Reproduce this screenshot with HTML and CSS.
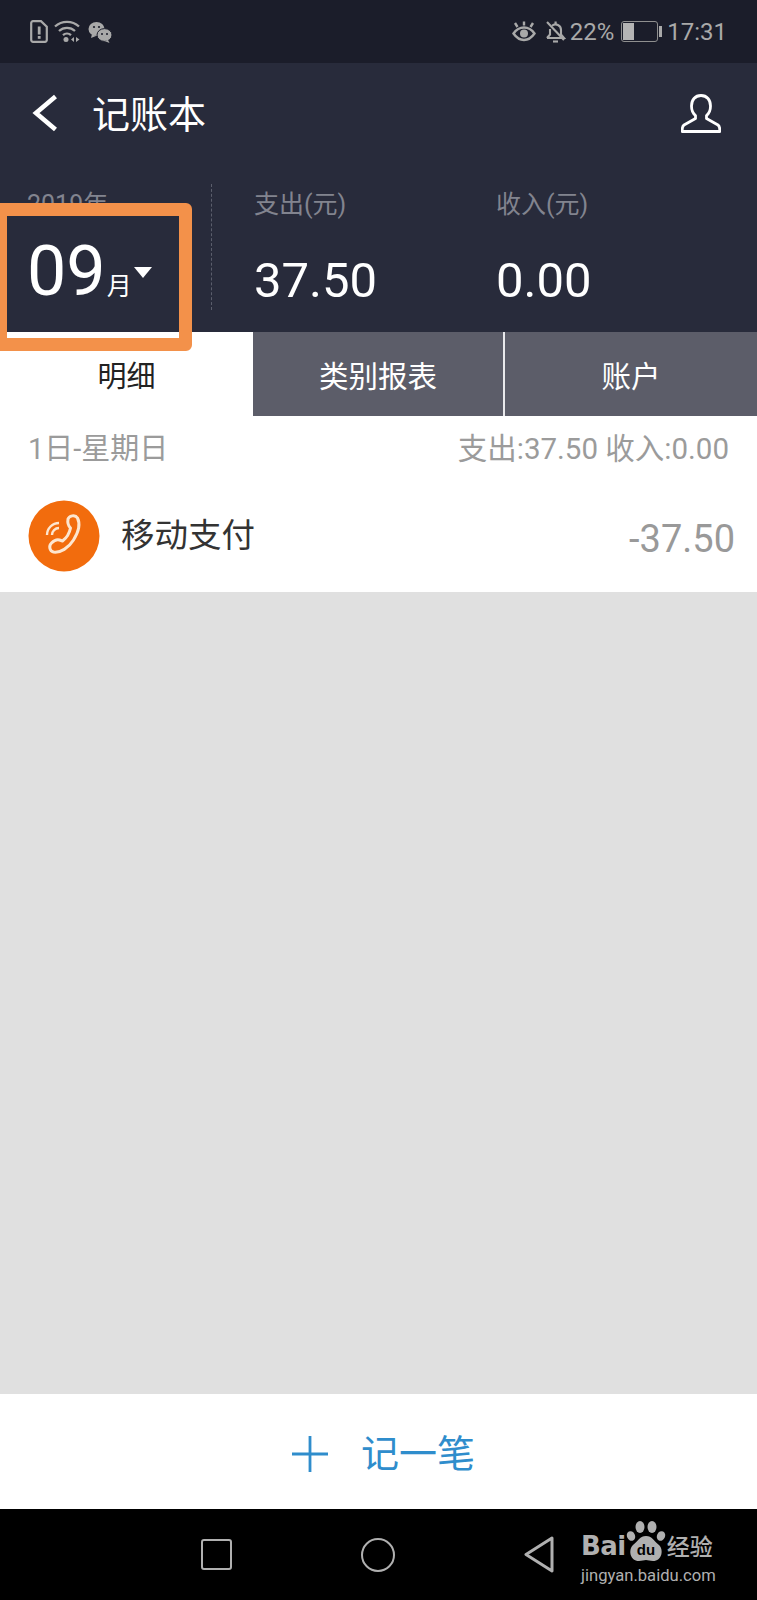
FILE: index.html
```html
<!DOCTYPE html>
<html lang="zh-CN">
<head>
    <meta charset="UTF-8">
    <title>记账本</title>
    <link rel="stylesheet" href="styles.css">
</head>
<body>
<div class="phone">
    <div class="status-bar">
        <div class="status-left">
            <svg width="18" height="23" viewBox="0 0 18 23"><path d="M3 1.200h8l5.800 5.600V20a1.800 1.800 0 0 1-1.800 1.800H3A1.800 1.800 0 0 1 1.200 20V3A1.800 1.800 0 0 1 3 1.200z" fill="none" stroke="#a9a9a9" stroke-width="2.200"/><rect x="7.800" y="6.500" width="2.800" height="8" fill="#a9a9a9"/><rect x="7.800" y="16" width="2.800" height="2.800" fill="#a9a9a9"/></svg>
            <svg width="28" height="23" viewBox="0 0 28 23"><g fill="none" stroke="#a9a9a9" stroke-width="2.300"><path d="M1 6.500a18 18 0 0 1 24 0"/><path d="M5 11a12 12 0 0 1 16 0"/><path d="M9 15.200a6 6 0 0 1 8 0"/></g><circle cx="12" cy="19.500" r="2.500" fill="#a9a9a9"/><path d="M20 17v5l-3-2.500zM22 17v5l3.500-2.500z" fill="#a9a9a9"/></svg>
            <svg width="24" height="22" viewBox="0 0 24 22"><ellipse cx="8.500" cy="8" rx="8" ry="7" fill="#a9a9a9"/><path d="M4 13l-1 4 5-2z" fill="#a9a9a9"/><ellipse cx="16.500" cy="14" rx="7.500" ry="6.400" fill="#a9a9a9" stroke="#1b1d2a" stroke-width="1"/><path d="M20 19l1.500 3-5-2z" fill="#a9a9a9"/><circle cx="6" cy="6" r="1.100" fill="#1b1d2a"/><circle cx="11" cy="6" r="1.100" fill="#1b1d2a"/><circle cx="14" cy="13" r="1" fill="#1b1d2a"/><circle cx="19" cy="13" r="1" fill="#1b1d2a"/></svg>
        </div>
        <div class="status-right">
            <svg class="eye" width="24" height="21" viewBox="0 0 24 21"><g fill="none" stroke="#a9a9a9" stroke-width="2.400"><path d="M1.500 12.500C5 7.500 8 6.500 12 6.500s7 1 10.500 6c-3.500 5-6.500 6.500-10.500 6.500s-7-1.500-10.500-6.500z"/><path d="M3 2l2.500 4M12 0.500v4M21 2l-2.500 4"/></g><circle cx="12" cy="12.500" r="4" fill="#a9a9a9"/></svg>
            <svg class="bell" width="21" height="22" viewBox="0 0 21 22"><g fill="none" stroke="#a9a9a9" stroke-width="2.100"><path d="M2 17h17l-3-3.500V9a5.500 5.500 0 0 0-9-4.300M5 8v5.500L2 17"/><path d="M2 1l17 18"/><path d="M8 20.500h5"/></g><rect x="9.500" y="0.500" width="2.200" height="3" fill="#a9a9a9"/></svg>
            <span class="status-text battery-text">22%</span>
            <div class="battery"><div class="battery-body"><div class="battery-level"></div></div><div class="battery-cap"></div></div>
            <span class="status-text">17:31</span>
        </div>
    </div>

    <div class="header">
        <div class="nav">
            <svg class="back" width="26" height="38" viewBox="0 0 26 38"><path d="M23.500 2.500L4 19l19.500 16.500" fill="none" stroke="#fff" stroke-width="4.600"/></svg>
            <span class="title">记账本</span>
            <svg class="person" width="40" height="39" viewBox="0 0 40 39"><path d="M20 1.500c-6 0-9.500 4.500-9.500 10.500 0 4 1.500 7.500 4 9.500v3L3 31c-1.500 1-2 2.500-1.800 6.500h37.600c.2-4-.3-5.500-1.800-6.500l-11.500-6.500v-3c2.500-2 4-5.500 4-9.500 0-6-3.500-10.500-9.500-10.500z" fill="none" stroke="#fff" stroke-width="2.800" stroke-linejoin="round"/></svg>
        </div>
        <div class="summary">
            <div class="month-col">
                <div class="year">2019年</div>
                <div class="month"><span class="month-num">09</span><span class="month-unit">月</span><span class="caret"></span></div>
            </div>
            <div class="stat stat-out">
                <div class="stat-label">支出(元)</div>
                <div class="stat-value">37.50</div>
            </div>
            <div class="stat">
                <div class="stat-label">收入(元)</div>
                <div class="stat-value">0.00</div>
            </div>
        </div>
    </div>

    <div class="tabs">
        <div class="tab tab-active">明细</div>
        <div class="tab tab-middle">类别报表</div>
        <div class="tab tab-last">账户</div>
    </div>

    <div class="day-row">
        <span>1日-星期日</span>
        <span class="day-total">支出:37.50 收入:0.00</span>
    </div>
    <div class="record">
        <svg class="record-icon" width="72" height="72" viewBox="0 0 72 72">
            <circle cx="36" cy="36" r="35.500" fill="#f26c0d"/>
            <path d="M40 19c1-3 7-5 9.500-1 3 6 1 14-4 22-5 8-13 13-20 12-4-1-5-6-2-9 2-2 5-4 8-3l3 1c4-3 7-8 8-13-2-2-3-6-2.500-9z" fill="none" stroke="#fde6cf" stroke-width="3" stroke-linejoin="round"/>
            <path d="M24 35a7 7 0 0 1 7-7M19 35a12 12 0 0 1 12-12" fill="none" stroke="#fde6cf" stroke-width="2.400"/>
        </svg>
        <span class="record-name">移动支付</span>
        <span class="record-amount">-37.50</span>
    </div>

    <div class="empty"></div>

    <div class="add-bar">
        <svg width="36" height="36" viewBox="0 0 36 36"><path d="M18 0v36M0 18h36" stroke="#2f8dcc" stroke-width="2.800"/></svg>
        <span class="add-text">记一笔</span>
    </div>

    <div class="system-nav">
        <div class="nav-square"></div>
        <div class="nav-circle"></div>
        <svg class="nav-back" width="30" height="37" viewBox="0 0 30 37"><path d="M28 2L2 18.500 28 35z" fill="none" stroke="#b0b0b0" stroke-width="3" stroke-linejoin="round"/></svg>
    </div>

    <div class="highlight"></div>

    <div class="watermark">
        <div class="wm-top">
            <span class="wm-bai">Bai</span>
            <svg class="wm-paw" width="40" height="41" viewBox="0 0 40 41">
                <g fill="#b0b0b0">
                    <ellipse cx="5" cy="15" rx="4" ry="5" transform="rotate(-25 5 15)"/>
                    <ellipse cx="14" cy="6" rx="4.500" ry="6"/>
                    <ellipse cx="26" cy="6" rx="4.500" ry="6"/>
                    <ellipse cx="35" cy="15" rx="4" ry="5" transform="rotate(25 35 15)"/>
                    <path d="M20 15c6 0 8 5 13 9 5 5 3 16-6 16-3 0-5-1-7-1s-4 1-7 1c-9 0-11-11-6-16 5-4 7-9 13-9z"/>
                </g>
                <text x="20" y="34" class="wm-du">du</text>
            </svg>
            <span class="wm-cn">经验</span>
        </div>
        <div class="wm-url">jingyan.baidu.com</div>
    </div>
</div>
</body>
</html>
```

FILE: styles.css
```css
html, body { margin: 0; padding: 0; }
body { background: #e0e0e0; font-family: Roboto, "Noto Sans CJK SC", sans-serif; }
.phone { position: relative; width: 757px; height: 1600px; overflow: hidden; display: flex; flex-direction: column; }

/* status bar */
.status-bar { height: 63px; background: #1b1d2a; display: flex; justify-content: space-between; align-items: center; padding: 0 30px; }
.status-left, .status-right { display: flex; align-items: center; }
.status-left { gap: 6px; }
.status-text { color: #a9a9a9; font-size: 24px; line-height: 28px; }
.bell { margin-left: 9px; }
.battery-text { margin-left: 4px; }
.battery { display: flex; align-items: center; margin: 0 5px 0 7px; }
.battery-body { width: 33px; height: 17px; border: 1px solid #8f8f8f; border-radius: 3px; padding: 1px; }
.battery-level { width: 11px; height: 100%; background: #b4b4b4; }
.battery-cap { width: 3px; height: 11px; background: #a9a9a9; margin-left: 1px; }

/* header */
.header { background: #282b3b; height: 269px; }
.nav { height: 100px; display: flex; align-items: center; padding: 0 36px 0 32px; }
.title { color: #fff; font-size: 38px; line-height: 44px; margin: 3px 0 0 34px; }
.person { margin-left: auto; }
.summary { display: flex; padding-top: 21px; }
.month-col { width: 212px; height: 126px; box-sizing: border-box; padding-left: 27px; border-right: 1px dashed #5b5e6c; }
.year { color: #82848f; font-size: 25px; line-height: 40px; padding-top: 1px; }
.month { display: flex; align-items: flex-start; color: #fff; margin-top: 11px; }
.month-num { font-size: 70px; line-height: 70px; }
.month-unit { font-size: 25px; line-height: 30px; margin: 36px 0 0 1px; }
.caret { width: 0; height: 0; border-left: 9px solid transparent; border-right: 9px solid transparent; border-top: 11px solid #fff; margin: 31px 0 0 2px; }
.stat { box-sizing: border-box; }
.stat-out { width: 284px; padding-left: 42px; }
.stat-label { color: #82848f; font-size: 25px; line-height: 40px; padding-top: 1px; }
.stat-value { color: #fff; font-size: 49px; line-height: 40px; margin-top: 36px; }

/* tabs */
.tabs { display: flex; height: 84px; }
.tab { display: flex; align-items: center; justify-content: center; font-size: 29.500px; color: #fff; background: #5c5d69; }
.tab-active { width: 253px; background: #fff; color: #222; font-size: 29px; }
.tab-middle { width: 250px; }
.tab-last { flex: 1; border-left: 2px solid #e9e9ec; }

/* list */
.day-row { height: 60px; background: #fff; display: flex; justify-content: space-between; align-items: center; padding: 0 28px; color: #9b9b9b; font-size: 29px; }
.day-total { font-size: 29.500px; }
.record { height: 116px; background: #fff; display: flex; align-items: center; padding: 3px 22px 0 28px; box-sizing: border-box; }
.record-name { color: #333; font-size: 33.500px; margin-left: 21px; margin-top: -6px; }
.record-amount { color: #999; font-size: 38px; margin-left: auto; margin-top: 6px; }
.empty { height: 802px; background: #e0e0e0; }

/* add bar */
.add-bar { height: 115px; box-sizing: border-box; background: #fff; display: flex; align-items: center; justify-content: center; gap: 33px; color: #2f8dcc; padding: 5px 0 0 10px; }
.add-text { font-size: 38px; line-height: 44px; }

/* android nav */
.system-nav { flex: 1; background: #000; display: flex; align-items: center; padding-left: 201px; gap: 129px; }
.nav-square { width: 27px; height: 27px; border: 2.500px solid #b0b0b0; border-radius: 3px; }
.nav-circle { width: 30px; height: 30px; border: 2.500px solid #b0b0b0; border-radius: 50%; }

/* orange annotation on top of the screenshot */
.highlight { position: absolute; left: -6px; top: 203px; width: 172px; height: 122px; border: 13px solid #f3914a; border-radius: 6px; }

/* baidu watermark */
.watermark { position: absolute; left: 581px; top: 1519px; width: 136px; color: #b0b0b0; }
.wm-top { display: flex; align-items: flex-end; height: 43px; }
.wm-bai { font-family: "DejaVu Sans", sans-serif; font-weight: 700; font-size: 26px; line-height: 30px; margin-bottom: 1px; letter-spacing: -0.5px; }
.wm-paw { flex-shrink: 0; }
.wm-du { font-family: "Liberation Sans", sans-serif; font-size: 15px; font-weight: 700; fill: #000; text-anchor: middle; }
.wm-cn { font-size: 23px; line-height: 28px; margin-left: 1px; font-weight: 500; white-space: nowrap; }
.wm-url { font-size: 16.600px; line-height: 20px; white-space: nowrap; margin-top: 4px; }
```
